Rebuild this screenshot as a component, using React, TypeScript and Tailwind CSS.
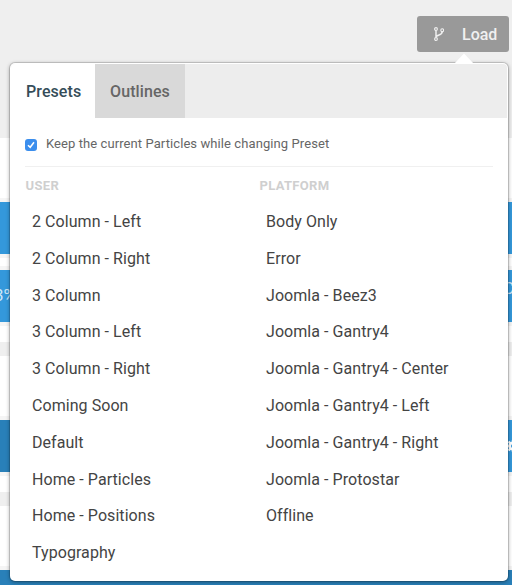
import React from "react";

const userPresets = [
  "2 Column - Left",
  "2 Column - Right",
  "3 Column",
  "3 Column - Left",
  "3 Column - Right",
  "Coming Soon",
  "Default",
  "Home - Particles",
  "Home - Positions",
  "Typography",
];

const platformPresets = [
  "Body Only",
  "Error",
  "Joomla - Beez3",
  "Joomla - Gantry4",
  "Joomla - Gantry4 - Center",
  "Joomla - Gantry4 - Left",
  "Joomla - Gantry4 - Right",
  "Joomla - Protostar",
  "Offline",
];

function ForkIcon() {
  return (
    <svg width="10" height="14" viewBox="0 0 10 14" fill="none" stroke="currentColor" strokeWidth="1.1">
      <circle cx="2" cy="2" r="1.4" />
      <circle cx="2" cy="12" r="1.4" />
      <circle cx="8.2" cy="3.2" r="1.4" />
      <path d="M2 3.4V10.6M8.2 4.6C8.2 8.6 4 7.4 2.2 9.6" strokeWidth="1.5" />
    </svg>
  );
}

function Column({ title, items }: { title: string; items: string[] }) {
  return (
    <div className="w-[234px] whitespace-nowrap">
      <h4 className="h-[27.2px] pl-[0.6px] text-[13px] leading-5 font-bold tracking-[0.3px] text-[#cfcfcf]">{title}</h4>
      <ul>
        {items.map((item) => (
          <li key={item} className="h-[36.78px] pl-[7px] text-base leading-[37px] tracking-[0.06px] text-[#444]">
            {item}
          </li>
        ))}
      </ul>
    </div>
  );
}

function Popover() {
  return (
    <div className="absolute top-[63px] left-[10px] h-[518px] w-[498px] rounded-[5px] bg-white shadow-[0_0_0_1px_rgba(0,0,0,0.13),0_1px_4px_rgba(0,0,0,0.4)]">
      <svg className="absolute -top-[11px] left-[443px]" width="22" height="12" viewBox="0 0 22 12">
        <path d="M1 12L11 1.5L21 12Z" fill="#fff" />
      </svg>
      <div className="mx-px mt-px flex h-[54px] rounded-t bg-[#ededed] text-base leading-[56px] font-medium tracking-[0.08px]">
        <div className="w-[84px] rounded-tl bg-white pl-[15px] text-[#354d59]">Presets</div>
        <div className="w-[90px] bg-[#d9d9d9] text-center text-[#666]">Outlines</div>
      </div>
      <div className="mx-[15px] flex h-[49px] items-center border-b border-[#f0f0f0] pt-[4px]">
        <span className="mt-[2px] flex size-3 items-center justify-center rounded-[3px] bg-[#3b8eed]">
          <svg width="8" height="8" viewBox="0 0 8 8" fill="none" stroke="white" strokeWidth="1.5">
            <path d="M1 4.2L3.2 6.3L7 1.3" />
          </svg>
        </span>
        <span className="ml-[9px] text-[13px] tracking-[0.085px] text-[#666]">Keep the current Particles while changing Preset</span>
      </div>
      <div className="flex pt-[9px] pl-[15px]">
        <Column title="USER" items={userPresets} />
        <Column title="PLATFORM" items={platformPresets} />
      </div>
    </div>
  );
}

export default function App() {
  return (
    <div className="relative h-[585px] w-[512px] overflow-hidden bg-[#efefef] font-['Roboto',sans-serif]">
      <header className="flex h-[138px] justify-end pt-4 pr-[3px]">
        <button className="flex h-9 w-[92px] items-center rounded-[3px] bg-[#999] pl-[17px] text-base font-medium text-[#f0f0f0]">
          <ForkIcon />
          <span className="mt-px ml-[18px]">Load</span>
        </button>
      </header>
      <main>
        <section className="h-[204px] bg-white pt-[60px]">
          <div className="h-[60px] border-y-4 border-[#f5f5f5] bg-[#3498db]" />
          <div className="mt-2 flex h-[60px] items-center justify-between border-y-4 border-[#f5f5f5] bg-[#3498db] text-[17px] text-[#cce7f8]">
            <span className="-ml-[6px]">3%</span>
            <span className="-mr-[2px] mb-[14px]">C</span>
          </div>
        </section>
        <section className="mt-[14px] h-[136px] bg-white pt-[60px]">
          <div className="flex h-[60px] items-center justify-end border-y-4 border-[#f5f5f5] bg-linear-to-r from-[#2980b9] from-50% to-[#3498db] to-50%">
            <svg className="-mr-[7px]" width="12" height="12" viewBox="0 0 12 12" fill="none" stroke="white">
              <circle cx="6" cy="6" r="3.3" strokeWidth="2.5" />
              <path d="M6 0V12M0 6H12M1.5 1.5L10.5 10.5M10.5 1.5L1.5 10.5" strokeWidth="2.4" />
              <circle cx="6" cy="6" r="2" fill="#3498db" stroke="none" />
            </svg>
          </div>
        </section>
        <section className="mt-[14px] bg-white pt-[60px]">
          <div className="h-[60px] border-y-4 border-[#f5f5f5] bg-[#2980b9]" />
        </section>
      </main>
      <Popover />
    </div>
  );
}
